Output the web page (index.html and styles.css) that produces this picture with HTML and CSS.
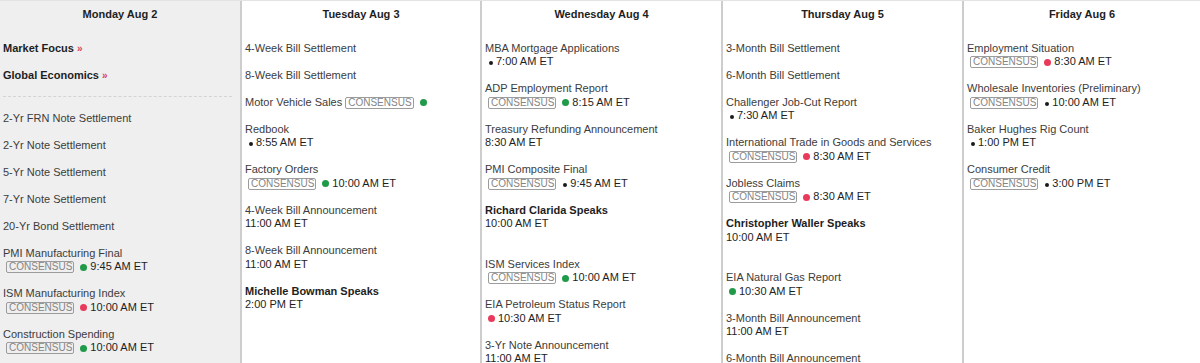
FILE: index.html
```html
<!DOCTYPE html>
<html lang="en">
<head>
<meta charset="utf-8">
<title>Economic Calendar</title>
<link rel="stylesheet" href="styles.css">
</head>
<body>
<div class="calendar">
  <section class="day day-current">
    <h2 class="day-head">Monday Aug 2</h2>
    <div class="day-body">
      <div class="links">
        <a class="link">Market Focus <span class="raquo">»</span></a>
        <a class="link">Global Economics <span class="raquo">»</span></a>
      </div>
      <ul class="events">
        <li class="event"><div class="title">2-Yr FRN Note Settlement</div></li>
        <li class="event"><div class="title">2-Yr Note Settlement</div></li>
        <li class="event"><div class="title">5-Yr Note Settlement</div></li>
        <li class="event"><div class="title">7-Yr Note Settlement</div></li>
        <li class="event"><div class="title">20-Yr Bond Settlement</div></li>
        <li class="event"><div class="title">PMI Manufacturing Final</div>
          <div class="meta"><span class="badge">CONSENSUS</span><span class="dot green"></span><span class="time">9:45 AM ET</span></div></li>
        <li class="event"><div class="title">ISM Manufacturing Index</div>
          <div class="meta"><span class="badge">CONSENSUS</span><span class="dot red"></span><span class="time">10:00 AM ET</span></div></li>
        <li class="event"><div class="title">Construction Spending</div>
          <div class="meta"><span class="badge">CONSENSUS</span><span class="dot green"></span><span class="time">10:00 AM ET</span></div></li>
      </ul>
    </div>
  </section>

  <section class="day">
    <h2 class="day-head">Tuesday Aug 3</h2>
    <div class="day-body">
      <ul class="events">
        <li class="event"><div class="title">4-Week Bill Settlement</div></li>
        <li class="event"><div class="title">8-Week Bill Settlement</div></li>
        <li class="event"><div class="title inline">Motor Vehicle Sales <span class="badge">CONSENSUS</span><span class="dot green"></span></div></li>
        <li class="event"><div class="title">Redbook</div>
          <div class="meta"><span class="dot black"></span><span class="time">8:55 AM ET</span></div></li>
        <li class="event"><div class="title">Factory Orders</div>
          <div class="meta"><span class="badge">CONSENSUS</span><span class="dot green"></span><span class="time">10:00 AM ET</span></div></li>
        <li class="event"><div class="title">4-Week Bill Announcement</div>
          <div class="meta plain"><span class="time">11:00 AM ET</span></div></li>
        <li class="event"><div class="title">8-Week Bill Announcement</div>
          <div class="meta plain"><span class="time">11:00 AM ET</span></div></li>
        <li class="event speaker"><div class="title strong">Michelle Bowman Speaks</div>
          <div class="meta plain"><span class="time">2:00 PM ET</span></div></li>
      </ul>
    </div>
  </section>

  <section class="day">
    <h2 class="day-head">Wednesday Aug 4</h2>
    <div class="day-body">
      <ul class="events">
        <li class="event"><div class="title">MBA Mortgage Applications</div>
          <div class="meta"><span class="dot black"></span><span class="time">7:00 AM ET</span></div></li>
        <li class="event"><div class="title">ADP Employment Report</div>
          <div class="meta"><span class="badge">CONSENSUS</span><span class="dot green"></span><span class="time">8:15 AM ET</span></div></li>
        <li class="event"><div class="title">Treasury Refunding Announcement</div>
          <div class="meta plain"><span class="time">8:30 AM ET</span></div></li>
        <li class="event"><div class="title">PMI Composite Final</div>
          <div class="meta"><span class="badge">CONSENSUS</span><span class="dot black"></span><span class="time">9:45 AM ET</span></div></li>
        <li class="event speaker"><div class="title strong">Richard Clarida Speaks</div>
          <div class="meta plain"><span class="time">10:00 AM ET</span></div></li>
        <li class="event"><div class="title">ISM Services Index</div>
          <div class="meta"><span class="badge">CONSENSUS</span><span class="dot green"></span><span class="time">10:00 AM ET</span></div></li>
        <li class="event"><div class="title">EIA Petroleum Status Report</div>
          <div class="meta"><span class="dot red"></span><span class="time">10:30 AM ET</span></div></li>
        <li class="event"><div class="title">3-Yr Note Announcement</div>
          <div class="meta plain"><span class="time">11:00 AM ET</span></div></li>
      </ul>
    </div>
  </section>

  <section class="day">
    <h2 class="day-head">Thursday Aug 5</h2>
    <div class="day-body">
      <ul class="events">
        <li class="event"><div class="title">3-Month Bill Settlement</div></li>
        <li class="event"><div class="title">6-Month Bill Settlement</div></li>
        <li class="event"><div class="title">Challenger Job-Cut Report</div>
          <div class="meta"><span class="dot black"></span><span class="time">7:30 AM ET</span></div></li>
        <li class="event"><div class="title">International Trade in Goods and Services</div>
          <div class="meta"><span class="badge">CONSENSUS</span><span class="dot red"></span><span class="time">8:30 AM ET</span></div></li>
        <li class="event"><div class="title">Jobless Claims</div>
          <div class="meta"><span class="badge">CONSENSUS</span><span class="dot red"></span><span class="time">8:30 AM ET</span></div></li>
        <li class="event speaker"><div class="title strong">Christopher Waller Speaks</div>
          <div class="meta plain"><span class="time">10:00 AM ET</span></div></li>
        <li class="event"><div class="title">EIA Natural Gas Report</div>
          <div class="meta"><span class="dot green"></span><span class="time">10:30 AM ET</span></div></li>
        <li class="event"><div class="title">3-Month Bill Announcement</div>
          <div class="meta plain"><span class="time">11:00 AM ET</span></div></li>
        <li class="event"><div class="title">6-Month Bill Announcement</div>
          <div class="meta plain"><span class="time">11:00 AM ET</span></div></li>
      </ul>
    </div>
  </section>

  <section class="day">
    <h2 class="day-head">Friday Aug 6</h2>
    <div class="day-body">
      <ul class="events">
        <li class="event"><div class="title">Employment Situation</div>
          <div class="meta"><span class="badge">CONSENSUS</span><span class="dot red"></span><span class="time">8:30 AM ET</span></div></li>
        <li class="event"><div class="title">Wholesale Inventories (Preliminary)</div>
          <div class="meta"><span class="badge">CONSENSUS</span><span class="dot black"></span><span class="time">10:00 AM ET</span></div></li>
        <li class="event"><div class="title">Baker Hughes Rig Count</div>
          <div class="meta"><span class="dot black"></span><span class="time">1:00 PM ET</span></div></li>
        <li class="event"><div class="title">Consumer Credit</div>
          <div class="meta"><span class="badge">CONSENSUS</span><span class="dot black"></span><span class="time">3:00 PM ET</span></div></li>
      </ul>
    </div>
  </section>
</div>
</body>
</html>
```

FILE: styles.css
```css
html, body {
  margin: 0;
  padding: 0;
  background: #ffffff;
}

body {
  font-family: "Liberation Sans", Arial, sans-serif;
  font-size: 11px;
  color: #3c3c3c;
  height: 363px;
  overflow: hidden;
}

.calendar {
  display: grid;
  grid-template-columns: 240px 240px 241px 241px 1fr;
  border-top: 1px solid #e3e3e3;
  height: 362px;
}

.day {
  border-left: 2px solid #cdcdcd;
  padding: 0 3px 0 3px;
  min-width: 0;
  overflow: hidden;
}

.day-current {
  border-left: none;
  background: #efefef;
  padding-left: 3px;
}

.day-head {
  margin: 0;
  height: 27px;
  line-height: 27px;
  text-align: center;
  font-size: 11px;
  font-weight: bold;
  color: #1e1e1e;
}

.day-body {
  padding-top: 13.75px;
}

.links {
  display: flex;
  flex-direction: column;
  gap: 13.5px;
  padding-bottom: 13.5px;
  border-bottom: 1px dashed #d4d4d4;
  margin-right: 5px;
  margin-bottom: 15px;
}

.link {
  font-weight: bold;
  color: #1e1e1e;
  line-height: 13.5px;
}

.raquo {
  color: #d8435e;
  font-size: 10px;
}

.events {
  list-style: none;
  margin: 0;
  padding: 0;
}

.event {
  margin-bottom: 13.5px;
}

.event.speaker {
  margin-bottom: 27px;
}

.title {
  line-height: 13.5px;
  white-space: nowrap;
  color: #3c3c3c;
}

.title.strong {
  font-weight: bold;
  color: #1e1e1e;
}

.title.inline {
  display: flex;
  align-items: center;
  height: 13.5px;
}

.title.inline .badge {
  margin-left: 3px;
}

.meta {
  display: flex;
  align-items: center;
  height: 13.5px;
  padding-left: 3px;
  white-space: nowrap;
}

.meta.plain {
  padding-left: 0;
}

.badge {
  display: inline-block;
  box-sizing: border-box;
  height: 12px;
  line-height: 10px;
  padding: 0 1px 0 2px;
  border: 1px solid #9c9c9c;
  border-radius: 2px;
  font-size: 10px;
  color: #858585;
  margin-right: 6px;
}

.dot {
  display: inline-block;
  width: 7px;
  height: 7px;
  border-radius: 50%;
  margin-right: 3px;
  flex: none;
}

.dot.green { background: #1f9a48; }
.dot.red { background: #e93a5c; }
.dot.black {
  width: 4px;
  height: 4px;
  background: #1a1a1a;
  margin-top: 2px;
  margin-left: 1px;
  margin-right: 3px;
}

.time {
  color: #1e1e1e;
  line-height: 13.5px;
}
```
